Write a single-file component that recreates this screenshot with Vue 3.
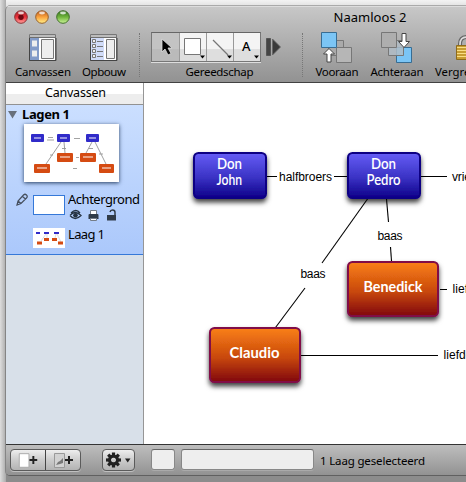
<script setup>
const nodes = [
  { x: 194, y: 153, w: 72, h: 45, kind: 'blue', lines: [{ t: 'Don', x: 217, y: 169, w: 25 }, { t: 'John', x: 216.5, y: 185, w: 25.5 }] },
  { x: 348, y: 153, w: 72, h: 45, kind: 'blue', lines: [{ t: 'Don', x: 371, y: 169, w: 25 }, { t: 'Pedro', x: 366.5, y: 185, w: 34 }] },
  { x: 348, y: 262, w: 90, h: 54, kind: 'orange', lines: [{ t: 'Benedick', x: 363.5, y: 292, w: 59 }] },
  { x: 210, y: 328, w: 90, h: 54, kind: 'orange', lines: [{ t: 'Claudio', x: 229.5, y: 358, w: 50 }] },
]
const edges = [
  [267, 176.5, 277, 176.5], [334, 176.5, 347, 176.5], [421, 176.5, 447, 176.5],
  [367.5, 199, 322, 263], [305, 288, 275.5, 327.5], [386.5, 199, 388.5, 222],
  [390.5, 247, 391.5, 261], [440, 289.5, 447, 289.5], [301, 355.5, 438, 355.5],
]
const labels = [
  { t: 'halfbroers', x: 279, y: 181, w: 53 }, { t: 'vriendschap', x: 452, y: 181, w: 63 },
  { t: 'baas', x: 377.5, y: 240, w: 25 }, { t: 'baas', x: 300.5, y: 278, w: 25 },
  { t: 'liefde', x: 452.5, y: 293, w: 29 }, { t: 'liefde', x: 443.5, y: 359, w: 29 },
]
const miniNodes = [
  [7, 10, 13, 8, 'blue'], [33, 10, 13, 8, 'blue'], [62, 10, 13, 8, 'blue'],
  [33, 29, 16, 9, 'orange'], [56, 29, 16, 9, 'orange'], [10, 40, 16, 9, 'orange'], [75, 40, 15, 9, 'orange'],
]
const tinyNodes = [[3, 4, 4, 2, 'blue'], [11, 4, 5, 2, 'blue'], [21, 4, 5, 2, 'blue'], [11, 10, 5, 3, 'orange'], [19, 10, 5, 3, 'orange'], [4, 13.5, 5, 3, 'orange'], [25, 13.5, 5, 3, 'orange']]
const teeth = [0, 45, 90, 135, 180, 225, 270, 315]
</script>

<template>
  <div class="desktop">
    <div class="window">
      <header>
        <div class="titlebar">
          <svg class="lights" width="58" height="16" viewBox="0 0 58 16">
            <defs>
              <linearGradient id="red" x2="0" y2="1"><stop stop-color="#94272d" /><stop offset=".5" stop-color="#ed2e38" /><stop offset="1" stop-color="#ffa4a0" /></linearGradient>
              <linearGradient id="amber" x2="0" y2="1"><stop stop-color="#b6571f" /><stop offset=".5" stop-color="#fba23d" /><stop offset="1" stop-color="#fff28c" /></linearGradient>
              <linearGradient id="green" x2="0" y2="1"><stop stop-color="#316d20" /><stop offset=".5" stop-color="#6fb43b" /><stop offset="1" stop-color="#cdf59a" /></linearGradient>
            </defs>
            <g stroke-width="1">
              <circle cx="8" cy="8" r="6.3" fill="url(#red)" stroke="#8b3033" />
              <circle cx="29" cy="8" r="6.3" fill="url(#amber)" stroke="#96602e" />
              <circle cx="50" cy="8" r="6.3" fill="url(#green)" stroke="#426f2d" />
            </g>
            <circle cx="8" cy="8.2" r="2.7" fill="#6f0710" />
            <g fill="#fff" opacity=".75"><ellipse cx="8" cy="4" rx="3" ry="1.4" /><ellipse cx="29" cy="4" rx="3" ry="1.4" /><ellipse cx="50" cy="4" rx="3" ry="1.4" /></g>
          </svg>
          <svg class="title" width="76" height="22"><text x="0.5" y="16" textLength="73">Naamloos 2</text></svg>
        </div>
        <div class="toolbar">
          <div class="tool">
            <svg width="28" height="28" viewBox="0 0 28 28">
              <path d="M.5.5h26v26H.5z" fill="#fff" stroke="#777" /><path d="M1 1h25v3H1z" fill="#bcbcbc" /><path d="M1 4h9v22H1z" fill="#839bc8" /><path d="M0 3.5h27" stroke="#6f6f6f" />
              <path d="M3 6.500h5v6H3zM3 16.500h5v6H3z" fill="#eee" /><path d="M12.500 5.500h12v19h-12z" fill="#eee" stroke="#777" /><path d="M.5 4v22.500h26.500V4" fill="none" stroke="#444" />
            </svg>
            <svg class="label" width="60" height="18"><text x="2" y="12" textLength="56">Canvassen</text></svg>
          </div>
          <div class="tool">
            <svg width="28" height="28" viewBox="0 0 28 28">
              <path d="M.5.5h26v26H.5z" fill="#fff" stroke="#777" /><path d="M1 1h25v3H1z" fill="#bcbcbc" /><path d="M1 4h13v22H1z" fill="#d1dcf8" /><path d="M0 3.500h27" stroke="#6f6f6f" />
              <path d="M2.500 5.500h3v3h-3zM2.500 10.500h3v3h-3zM2.500 15.500h3v3h-3zM2.500 20.500h3v3h-3zM7 7.500h6M7 12.500h6M7 17.500h6M7 22.500h6M16.500 5.500h8v19h-8z" fill="#eee" stroke="#777" /><path d="M.5 4v22.500h26.500V4" fill="none" stroke="#444" />
            </svg>
            <svg class="label" width="48" height="18"><text x="2" y="12" textLength="44">Opbouw</text></svg>
          </div>
          <div class="separator"></div>
          <div class="tool drawing">
            <div class="tool-row">
              <div class="segments">
                <div class="segment active"><svg width="27" height="28" viewBox="0 0 27 28"><path d="M10 6v13l3-3 3 6 3-1.500-3-5.500h4z" fill="#000" stroke="#ddd" stroke-width=".8" /></svg></div>
                <div class="segment"><svg width="26" height="28" viewBox="0 0 26 28"><path d="M4.500 5.500h16v16h-16z" fill="#fff" stroke="#777" /><path d="M20 22.500h5l-2.500 3z" /></svg></div>
                <div class="segment"><svg width="26" height="28" viewBox="0 0 26 28"><path d="M6 7l15 15" stroke="#777" stroke-width="1.200" /><path d="M20 22.500h5l-2.500 3z" /></svg></div>
                <div class="segment"><svg width="26" height="28" viewBox="0 0 26 28"><text class="glyph-a" x="8" y="18">A</text><path d="M20 22.500h5l-2.500 3z" /></svg></div>
              </div>
              <svg width="16" height="28" viewBox="0 0 16 28"><path d="M.5 5.500h4v17h-4z" fill="#444" stroke="#555" /><path d="M6.500 6v16l8-8z" fill="#3a3a3a" stroke="#666" stroke-width=".8" /></svg>
            </div>
            <svg class="label" width="72" height="18"><text x="1.500" y="12" textLength="68">Gereedschap</text></svg>
          </div>
          <div class="separator"></div>
          <div class="tool order">
            <svg width="32" height="32" viewBox="0 0 32 32">
              <g fill="#aaa" stroke="#777"><path d="M7.500 8.500h15v15h-15z" /><path d="M15.500 15.500h15v15h-15z" fill="#b6b6b6" /></g>
              <path d="M.5.500h15v15H.5z" fill="#7bc5f5" stroke="#386d93" /><path d="M8 16.500l5.500 5.500H10v8H6v-8H2.500z" fill="#fff" stroke="#444" />
            </svg>
            <svg class="label" width="48" height="18"><text x="2.500" y="12" textLength="43">Vooraan</text></svg>
          </div>
          <div class="tool order">
            <svg width="32" height="32" viewBox="0 0 32 32">
              <path d="M15.500 15.500h15v15h-15z" fill="#7bc5f5" stroke="#386d93" /><path d="M7.500 8.500h15v15h-15z" fill="#b0bcc5" fill-opacity=".85" stroke="#777" /><path d="M.5.500h15v15H.5z" fill="#aeaeae" stroke="#777" />
              <path d="M21 1.500h4v8h3.500L23 15.500 17.500 9.500H21z" fill="#fff" stroke="#444" />
            </svg>
            <svg class="label" width="56" height="18"><text x="1.500" y="12" textLength="53">Achteraan</text></svg>
          </div>
          <div class="tool lock">
            <svg width="32" height="28" viewBox="0 0 32 28">
              <path d="M4 13v-3q0-7 7-7t7 7v3" fill="none" stroke="#666" stroke-width="4" /><path d="M4 13v-3q0-7 7-7t7 7v3" fill="none" stroke="#ddd" stroke-width="1.700" />
              <path d="M.5 11.500h22v14H.5z" fill="#c89d32" stroke="#8d6b1c" /><path d="M1 13.500h21M1 16.500h21M1 19.500h21M1 22.500h21" stroke="#f8df86" />
            </svg>
            <svg class="label" width="85" height="18"><text x="0" y="12" textLength="72" lengthAdjust="spacingAndGlyphs">Vergrendelen</text></svg>
          </div>
        </div>
      </header>

      <main>
        <aside>
          <div class="side-head"><svg width="64" height="20"><text x="2" y="14" textLength="61">Canvassen</text></svg></div>
          <section class="layers">
            <div class="group-title">
              <svg width="11" height="10"><path d="M1 1h9L5.500 8.500z" fill="#68707b" /></svg>
              <svg width="60" height="18"><text x="0" y="13" textLength="48">Lagen 1</text></svg>
            </div>
            <div class="thumbnail">
              <svg width="95" height="58" viewBox="0 0 95 58">
                <path d="M37 18L22 40M40 18l1 11M68 18l-6 11M71 18l11 22" stroke="#888" stroke-width=".8" fill="none" />
                <g v-for="(n, i) in miniNodes" :key="i"><rect :x="n[0]" :y="n[1]" :width="n[2]" :height="n[3]" rx="1" :class="n[4]" /><path :d="`M${n[0] + 3} ${n[1] + 4}h${n[2] - 6}`" stroke="#fff" stroke-width="1.500" opacity=".65" /></g>
                <path d="M24 13.500h5M23 16h7M50 14.500h6M38 24.500h4M26 31h3M65 24.500h4M75 30h4M52 33.500h3M49 44.500h4" stroke="#999" stroke-width=".9" />
              </svg>
            </div>
            <div class="layer">
              <svg class="pencil" width="12" height="13" viewBox="0 0 12 13"><path d="M1 12l1-4 5.500-6q1.500-1.500 3 0t0 3L5 10.500zM2 8l3 2.500M6.500 3.500l3 2.500" fill="none" stroke="#46505f" stroke-width="1.200" /></svg>
              <div class="preview selected"></div>
              <div class="layer-info">
                <svg width="75" height="19"><text x="0" y="14" textLength="72">Achtergrond</text></svg>
                <svg class="states" width="50" height="13" viewBox="0 0 50 13">
                  <path d="M2 6.500q5-6 11 0-6 6-11 0M3 4q5-5 9 0" fill="none" stroke="#263342" stroke-width="1.300" /><circle cx="7.500" cy="6.300" r="2.300" fill="#263342" />
                  <path d="M22.500 1.500h6v4h-6z" fill="#fff" stroke="#747d88" /><path d="M21.500 5h8q1 0 1 1v4h-10V6q0-1 1-1" fill="#303b48" /><path d="M22.500 9.500h6v2h-6z" fill="#fff" stroke="#747d88" />
                  <path d="M39 6h9v5.500h-9z" fill="#303b48" /><path d="M42 3q.5-2 2.500-2 2.500 0 2.500 2.500V6" fill="none" stroke="#303b48" stroke-width="1.500" />
                </svg>
              </div>
            </div>
            <div class="layer second">
              <div class="preview"><svg width="32" height="20" viewBox="0 0 32 20"><path d="M13 6l-5 7M14 6v4M23 6l-1 4M24 6l4 8" stroke="#bbb" stroke-width=".5" /><rect v-for="(n, i) in tinyNodes" :key="i" :x="n[0]" :y="n[1]" :width="n[2]" :height="n[3]" :class="n[4]" /></svg></div>
              <svg width="50" height="18"><text x="0" y="12" textLength="37">Laag 1</text></svg>
            </div>
          </section>
        </aside>

        <svg class="canvas" width="322" height="361" viewBox="144 83 322 361">
          <defs>
            <linearGradient id="nodeBlue" x2="0" y2="1"><stop stop-color="#655df6" /><stop offset=".55" stop-color="#3a32c4" /><stop offset="1" stop-color="#0d0089" /></linearGradient>
            <linearGradient id="nodeOrange" x2="0" y2="1"><stop stop-color="#fa8015" /><stop offset=".55" stop-color="#c8480e" /><stop offset="1" stop-color="#800608" /></linearGradient>
            <filter id="shadow" x="-20%" y="-20%" width="140%" height="150%"><feDropShadow dx="0" dy="3.500" stdDeviation="2.700" flood-opacity=".75" /></filter>
          </defs>
          <path v-for="(e, i) in edges" :key="i" :d="`M${e[0]} ${e[1]}L${e[2]} ${e[3]}`" stroke="#000" stroke-width="1.100" />
          <text v-for="(l, i) in labels" :key="i" class="edge-label" :x="l.x" :y="l.y" :textLength="l.w">{{ l.t }}</text>
          <g v-for="(n, i) in nodes" :key="i">
            <rect :class="['node', n.kind]" :x="n.x" :y="n.y" :width="n.w" :height="n.h" rx="4.500" filter="url(#shadow)" />
            <text v-for="l in n.lines" :key="l.t" :class="['node-label', n.kind + '-label']" :x="l.x" :y="l.y" :textLength="l.w" lengthAdjust="spacingAndGlyphs">{{ l.t }}</text>
          </g>
        </svg>
      </main>

      <footer>
        <div class="button pair">
          <svg width="35" height="20" viewBox="0 0 35 20"><path d="M8.500 3.500h10v14h-10z" fill="#fff" stroke="#aaa" /><path d="M19 10h8M23 6v8" stroke="#222" stroke-width="2" /></svg>
          <svg width="34" height="20" viewBox="0 0 34 20"><path d="M8.500 3.500h10v14h-10z" fill="#d2d2d2" stroke="#999" /><path d="M10 15l2-3 2-1 3-3v5l-3 1z" fill="#777" /><path d="M19 10h8M23 6v8" stroke="#222" stroke-width="2" /></svg>
        </div>
        <div class="button gear">
          <svg width="31" height="20" viewBox="0 0 31 20"><g transform="translate(10.500 10)" fill="#222"><rect v-for="a in teeth" :key="a" x="-1.600" y="-7.500" width="3.200" height="5" :transform="`rotate(${a})`" /></g><circle cx="10.500" cy="10" r="4" fill="none" stroke="#222" stroke-width="3" /><path d="M22 8.500h5.500L24.700 12.500z" fill="#222" /></svg>
        </div>
        <div class="field small"></div>
        <div class="field wide"></div>
        <svg class="status" width="108" height="20"><text x="0" y="15" textLength="105">1 Laag geselecteerd</text></svg>
      </footer>
    </div>
  </div>
</template>

<style>
body { margin: 0; overflow: hidden; }
</style>

<style scoped>
* { box-sizing: border-box; }
svg { display: block; flex: none; }
.desktop { width: 466px; height: 482px; padding: 5px 0 6px 5px; overflow: hidden; background: linear-gradient(to right, #dedede, #aaa 6px, transparent 6px), linear-gradient(#f3f3f3, #e2e2e2 6px, #8c8c8c 470px); font-family: "Noto Sans", sans-serif; }
.window { width: 461px; height: 471px; overflow: hidden; border-left: 1px solid #858585; border-bottom: 1px solid #606060; border-radius: 6px 0 0 5px; background: #999; }
header { height: 78px; background: linear-gradient(#c8c8c8, #929292); border-top: 1px solid #aaa; border-bottom: 1px solid #424242; box-shadow: inset 0 1px #ddd; }
.titlebar { display: flex; height: 25px; padding-left: 7px; }
.lights { margin-top: 3px; }
.title { margin-left: 262px; font-size: 13px; }
.toolbar { display: grid; grid-template-columns: 74px 48px 23px 138px 26px 44px 76px 95px; height: 48px; }
.tool { display: flex; flex-direction: column; align-items: center; justify-content: space-between; padding-top: 3px; }
.tool.order { padding-top: 1px; }
.label { font-size: 11.5px; height: 16px; overflow: visible; }
.tool.lock { align-items: flex-start; }
.lock > svg:first-child { margin-left: 21px; }
.separator { justify-self: center; width: 1px; height: 44px; border-left: 1px dotted #777; margin-top: 2px; }
.drawing { align-items: center; padding-top: 1px; }
.tool-row { display: flex; width: 138px; gap: 5px; align-items: center; }
.segments { display: flex; border: 1px solid #777; border-top-color: #666; box-shadow: 0 1px #ddd; }
.segment { border-right: 1px solid #999; background: linear-gradient(#f4f4f4 0 58%, #dedede 59%); }
.segment:last-child { border-right: 0; }
.active { background: linear-gradient(#c3c3c3 0 58%, #bababa 59%); }
.glyph-a { font-size: 13px; font-weight: 500; }
main { display: flex; height: 361px; }
aside { width: 138px; background: #d8e0e9; border-right: 1px solid #969696; }
.side-head { display: flex; justify-content: center; height: 22px; font-size: 12.5px; background: linear-gradient(#fff 0 50%, #ededed 50%); border-bottom: 1px solid #929292; }
.layers { height: 150px; padding: 1px 0 0 1px; background: linear-gradient(#cbdfff, #abc8fb); border-bottom: 1px solid #3578d8; }
.group-title { display: flex; align-items: center; gap: 4px; height: 18px; font-size: 13px; font-weight: 700; }
.thumbnail { width: 95px; height: 58px; margin: 0 0 0 17px; background: #fff; box-shadow: 0 1px 4px #263d60; }
.layer { display: flex; margin: 8px 0 0 9px; font-size: 13px; height: 37px; }
.pencil { margin-top: 3px; }
.preview { width: 32px; height: 20px; margin: 9px 3px 0 5px; background: #fff; }
.layer .selected { margin-top: 5px; }
.selected { border: 1px solid #3578d8; }
.layer-info { display: flex; flex-direction: column; }
.layer.second { height: 24px; margin: 0 0 0 26px; }
.second .preview { margin: 1px 3px 0 0; }
.canvas { background: #fff; }
.blue { fill: #302bc9; }
.orange { fill: #d54b12; }
.node.blue { fill: url(#nodeBlue); stroke: #110083; stroke-width: 2; }
.node.orange { fill: url(#nodeOrange); stroke: #810846; stroke-width: 2; }
.edge-label { font: 12px "Liberation Sans", sans-serif; }
.node-label { font: 600 15px Lato, sans-serif; fill: #fff; }
.orange-label { font-weight: 700; }
footer { display: flex; height: 31px; padding: 4px 0 0 4px; background: linear-gradient(#bebebe, #929292); border-top: 1px solid #343434; }
.button { display: flex; flex: none; height: 22px; border: 1px solid #5b5b5b; border-radius: 4px; background: linear-gradient(#eee, #ccc 50%, #b3b3b3); box-shadow: 0 1px #c0c0c0; overflow: hidden; }
.pair { width: 71px; }
.pair svg:first-child { border-right: 1px solid #444; }
.gear { width: 33px; margin-left: 21px; }
.field { height: 21px; border: 1px solid #888; border-top-color: #666; border-radius: 3px; background: #eee; box-shadow: 0 1px #aaa; }
.small { width: 24px; margin-left: 16px; }
.wide { width: 133px; margin-left: 6px; }
.status { margin: 1px 0 0 6px; font-size: 11.500px; }
</style>
